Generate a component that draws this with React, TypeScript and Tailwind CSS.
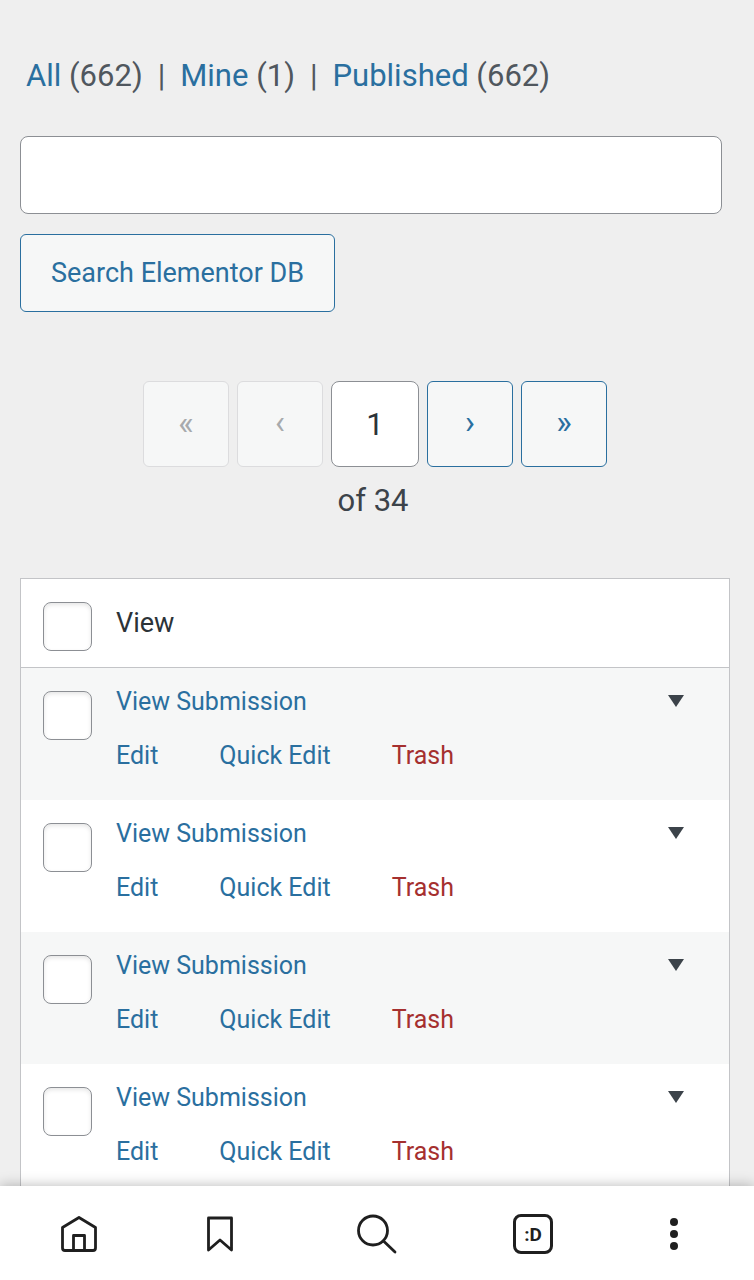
import React from "react";

const submissions = [1, 2, 3, 4];

const checkboxClass =
  "block size-[49px] appearance-none rounded-lg border border-[#8c8f94] bg-white shadow-[inset_0_2px_4px_rgba(0,0,0,0.1)] checked:bg-[#2271b1]";

const pagerButton =
  "flex h-[86px] w-[86px] items-center justify-center rounded-md border bg-[#f6f7f7] pb-1 text-[33px] leading-none";

function Filters() {
  return (
    <ul className="flex flex-wrap items-center gap-x-[15px] px-[6px] text-[31px] leading-10 text-[#50575e]">
      <li>
        <a href="#all" className="text-[#2a6f9f]">All</a> (662)
      </li>
      <li aria-hidden="true">|</li>
      <li>
        <a href="#mine" className="text-[#2a6f9f]">Mine</a> (1)
      </li>
      <li aria-hidden="true">|</li>
      <li>
        <a href="#published" className="text-[#2a6f9f]">Published</a> (662)
      </li>
    </ul>
  );
}

function SearchForm() {
  return (
    <form className="mt-10 flex flex-col items-start gap-5 pr-2" onSubmit={(e) => e.preventDefault()}>
      <input
        type="search"
        aria-label="Search submissions"
        className="h-[78px] w-full appearance-none rounded-lg border border-[#8c8f94] bg-white px-4 text-[31px] text-[#2c3338]"
      />
      <button
        type="submit"
        className="h-[78px] rounded-md border border-[#2a6f9f] bg-[#f6f7f7] px-[30px] text-[27px] text-[#2a6f9f]"
      >
        Search Elementor DB
      </button>
    </form>
  );
}

function Pagination() {
  return (
    <div className="mt-[69px] flex flex-col items-center">
      <div className="flex items-center gap-2">
        <button type="button" disabled aria-label="First page" className={`${pagerButton} border-[#dcdcde] text-[#a7aaad]`}>«</button>
        <button type="button" disabled aria-label="Previous page" className={`${pagerButton} border-[#dcdcde] text-[#a7aaad]`}>‹</button>
        <input
          type="text"
          aria-label="Current page"
          defaultValue="1"
          className="h-[86px] w-[88px] rounded-lg border border-[#8c8f94] bg-white text-center text-[31px] text-[#2c3338]"
        />
        <button type="button" aria-label="Next page" className={`${pagerButton} border-[#2a6f9f] text-[#2a6f9f]`}>›</button>
        <button type="button" aria-label="Last page" className={`${pagerButton} border-[#2a6f9f] text-[#2a6f9f]`}>»</button>
      </div>
      <p className="mt-[14px] pr-1 text-[31px] leading-10 text-[#3c434a]">of 34</p>
    </div>
  );
}

function SubmissionsTable() {
  return (
    <table className="mt-[57px] w-full border-separate border-spacing-0 border border-[#c3c4c7] bg-white text-left">
      <thead>
        <tr className="h-[89px]">
          <th className="w-[95px] border-b border-[#c3c4c7] pt-[23px] pl-[22px] align-top">
            <input type="checkbox" aria-label="Select all" className={checkboxClass} />
          </th>
          <th colSpan={2} className="border-b border-[#c3c4c7] text-[27px] font-normal text-[#2c3338]">
            View
          </th>
        </tr>
      </thead>
      <tbody>
        {submissions.map((id) => (
          <tr key={id} className="odd:bg-[#f6f7f7]">
            <td className="pt-[23px] pl-[22px] align-top">
              <input type="checkbox" aria-label={`Select submission ${id}`} className={checkboxClass} />
            </td>
            <td className="pt-[7px] pb-[17px] align-top text-[25px] leading-[54px] text-[#2a6f9f]">
              <a href="#view">View Submission</a>
              <div className="flex gap-[61px]">
                <a href="#edit">Edit</a>
                <button type="button">Quick Edit</button>
                <a href="#trash" className="text-[#a5302f]">Trash</a>
              </div>
            </td>
            <td className="w-[79px] pt-[17px] align-top">
              <button type="button" aria-label="Show more details" className="flex h-8 w-[52px] items-center justify-center">
                <svg width="16" height="12" viewBox="0 0 16 12" fill="#3c434a">
                  <path d="M0 0h16L8 12z" />
                </svg>
              </button>
            </td>
          </tr>
        ))}
      </tbody>
    </table>
  );
}

function BottomBar() {
  const item = "flex items-center justify-center";
  return (
    <nav className="relative z-10 grid h-[94px] shrink-0 grid-cols-[158fr_124fr_190fr_122fr_160fr] items-center bg-white pt-[2px] text-[#1f1f1f] shadow-[0_-1px_12px_rgba(0,0,0,0.25)]">
      <button type="button" aria-label="Home" className={item}>
        <svg width="40" height="40" viewBox="0 0 40 40" fill="none" stroke="currentColor" strokeWidth="2.8" strokeLinejoin="round">
          <path d="M20 3.5 36.5 13.5V34Q36.5 36.5 34 36.5H6Q3.5 36.5 3.5 34V13.5Z" />
          <path d="M14.5 36.5V21.5H25.5V36.5" />
        </svg>
      </button>
      <button type="button" aria-label="Bookmarks" className={item}>
        <svg width="40" height="40" viewBox="0 0 40 40" fill="none" stroke="currentColor" strokeWidth="2.8" strokeLinejoin="round">
          <path d="M8.5 4H31.5V36L20 26 8.5 36Z" />
        </svg>
      </button>
      <button type="button" aria-label="Search" className={item}>
        <svg width="40" height="40" viewBox="0 0 40 40" fill="none" stroke="currentColor" strokeWidth="2.8" strokeLinecap="round">
          <circle cx="16" cy="16.5" r="14.5" />
          <path d="M26.5 27 38 38" />
        </svg>
      </button>
      <button type="button" aria-label="Tabs" className={item}>
        <span className="flex size-10 items-center justify-center rounded-lg border-3 border-[#1f1f1f] text-[19px] leading-none font-bold">
          :D
        </span>
      </button>
      <button type="button" aria-label="Menu" className={item}>
        <svg width="40" height="40" viewBox="0 0 40 40" fill="currentColor">
          <circle cx="20" cy="8" r="4" />
          <circle cx="20" cy="20" r="4" />
          <circle cx="20" cy="32" r="4" />
        </svg>
      </button>
    </nav>
  );
}

export default function App() {
  return (
    <div className="flex h-screen flex-col bg-[#efefef] font-[Roboto,sans-serif]">
      <main className="min-h-0 flex-1 overflow-y-auto pt-14 pr-6 pl-5 [scrollbar-width:none]">
        <Filters />
        <SearchForm />
        <Pagination />
        <SubmissionsTable />
      </main>
      <BottomBar />
    </div>
  );
}
